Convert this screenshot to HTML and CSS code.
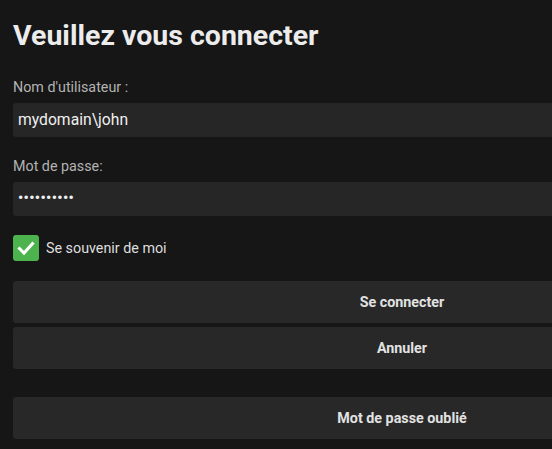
FILE: index.html
```html
<!DOCTYPE html>
<html lang="fr">
<head>
<meta charset="utf-8">
<link rel="stylesheet" href="styles.css">
</head>
<body>
<div class="login">
  <h1 class="title">Veuillez vous connecter</h1>
  <label class="label">Nom d'utilisateur :</label>
  <div class="field">mydomain\john</div>
  <label class="label label-pw">Mot de passe:</label>
  <div class="field field-pw">••••••••••</div>
  <div class="remember">
    <span class="check">
      <svg width="20" height="20" viewBox="0 0 20 20"><path d="M3.5 10.5 L8 15 L16.5 5.5" fill="none" stroke="#fff" stroke-width="3" stroke-linecap="square"/></svg>
    </span>
    <span class="remember-text">Se souvenir de moi</span>
  </div>
  <div class="btn btn-first">Se connecter</div>
  <div class="btn">Annuler</div>
  <div class="btn btn-forgot">Mot de passe oublié</div>
</div>
</body>
</html>
```
FILE: styles.css
```css
html, body {
  margin: 0;
  padding: 0;
  background: #161616;
  overflow: hidden;
}
body {
  font-family: Roboto, "Liberation Sans", sans-serif;
  color: #e6e6e6;
}
.login {
  width: 778px;
  padding: 16px 13px 0 13px;
}
.title {
  margin: 0;
  font-size: 28.5px;
  font-weight: 700;
  line-height: 40px;
  color: #ececec;
}
.label {
  display: block;
  margin-top: 22px;
  font-size: 14.3px;
  line-height: 18px;
  color: #b3b3b3;
}
.label-pw {
  margin-top: 20px;
}
.field {
  margin-top: 7px;
  height: 34px;
  border-radius: 3px;
  background: #262626;
  padding: 0 5px;
  font-size: 15.7px;
  line-height: 34px;
  color: #f0f0f0;
}
.field-pw {
  font-size: 14.5px;
  font-weight: 700;
  letter-spacing: 0.4px;
}
.remember {
  display: flex;
  align-items: center;
  gap: 7px;
  margin-top: 18px;
  height: 27px;
}
.check {
  width: 26px;
  height: 26px;
  border-radius: 3px;
  background: #4db34f;
  display: flex;
  align-items: center;
  justify-content: center;
}
.remember-text {
  font-size: 14.3px;
  color: #dedede;
}
.btn {
  margin-top: 4px;
  height: 42px;
  border-radius: 3px;
  background: #282828;
  display: flex;
  align-items: center;
  justify-content: center;
  font-size: 14.3px;
  font-weight: 700;
  color: #e2e2e2;
}
.btn-first {
  margin-top: 20px;
}
.btn-forgot {
  margin-top: 28px;
}
```
